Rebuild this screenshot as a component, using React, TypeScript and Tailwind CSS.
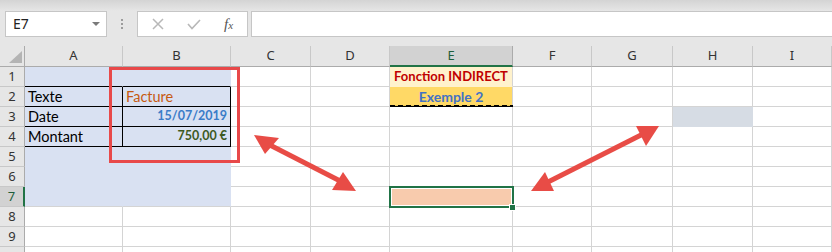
import React from 'react';

const letters = ['A', 'B', 'C', 'D', 'E', 'F', 'G', 'H', 'I'];
const rows = [1, 2, 3, 4, 5, 6, 7, 8, 9, 10];

function cellFont() {
  return "font-['Lato','Noto_Sans',sans-serif] text-[14.5px]";
}

function DataCell({ r, c }: { r: number; c: number }) {
  let bg = 'bg-white';
  let br = 'border-r-[#d4d4d4]';
  let bb = 'border-b-[#d4d4d4]';
  let content: React.ReactNode = null;
  let align = 'justify-start pl-[3px]';

  const shaded = (c === 0 || c === 1) && r >= 1 && r <= 7;
  if (shaded) {
    bg = 'bg-[#d9e1f2]';
    br = 'border-r-[#d9e1f2]';
    bb = r === 7 ? 'border-b-[#d4d4d4]' : 'border-b-[#d9e1f2]';
  }
  if ((c === 0 || c === 1) && r === 1) {
    bb = 'border-b-black';
  }
  if ((c === 0 || c === 1) && r >= 2 && r <= 4) {
    br = 'border-r-black';
    bb = 'border-b-black';
  }
  if (c === 0 && r === 2) content = <span className="text-black">Texte</span>;
  if (c === 0 && r === 3) content = <span className="text-black">Date</span>;
  if (c === 0 && r === 4) content = <span className="text-black">Montant</span>;
  if (c === 1 && r === 2) content = <span className="text-[#c65911]">Facture</span>;
  if (c === 1 && r === 3) {
    content = <span className="font-bold text-[12.5px] text-[#3a7cc8]">15/07/2019</span>;
    align = 'justify-end pr-[3px]';
  }
  if (c === 1 && r === 4) {
    content = <span className="font-bold text-[12.5px] text-[#3d5a1e]">750,00 €</span>;
    align = 'justify-end pr-[3px]';
  }
  if (c === 4 && r === 1) {
    bg = 'bg-[#fff2cc]';
    bb = 'border-b-[#fff2cc]';
    content = <span className="font-bold text-[13px] text-[#c00000]">Fonction INDIRECT</span>;
    align = 'justify-center';
  }
  if (c === 4 && r === 2) {
    bg = 'bg-[#ffd966]';
    content = <span className="font-bold text-[14px] text-[#4472c4]">Exemple 2</span>;
    align = 'justify-center';
  }
  if (c === 7 && r === 3) {
    bg = 'bg-[#d6dce4]';
    br = 'border-r-[#d6dce4]';
    bb = 'border-b-[#d6dce4]';
  }
  if (c === 4 && r === 7) {
    bg = 'bg-[#f8cbad]';
  }

  return (
    <div
      className={`h-[20px] border-r border-b ${br} ${bb} ${bg} flex items-center ${align} overflow-visible whitespace-nowrap ${cellFont()}`}
    >
      {content}
    </div>
  );
}

export default function App() {
  return (
    <div className="relative w-[832px] h-[252px] overflow-hidden bg-white">
      {/* Toolbar */}
      <div className="h-[46px] flex items-start pt-[11px] pl-[5px] bg-[linear-gradient(#d4d4d4,#e6e6e6_11px)]">
        <div className="w-[102px] h-[26px] bg-white border border-[#c6c6c6] flex items-center justify-between pl-[7px] pr-[5px]">
          <span className="font-['Noto_Sans','Open_Sans',sans-serif] text-[14px] text-[#222] leading-none">E7</span>
          <svg width="10" height="6" viewBox="0 0 10 6">
            <polygon points="1,1 9,1 5,5" fill="#7a7a7a" />
          </svg>
        </div>
        <div className="w-[30px] h-[26px] flex flex-col items-center justify-center gap-[2px]">
          <div className="w-[2px] h-[2px] bg-[#9c9c9c]" />
          <div className="w-[2px] h-[2px] bg-[#9c9c9c]" />
          <div className="w-[2px] h-[2px] bg-[#9c9c9c]" />
        </div>
        <div className="w-[111px] h-[26px] bg-white border border-[#c6c6c6] flex items-center">
          <div className="w-[38px] flex justify-center pl-[2px]">
            <svg width="12" height="12" viewBox="0 0 12 12">
              <path d="M1 1 L11 11 M11 1 L1 11" stroke="#b8b8b8" strokeWidth="1.5" fill="none" />
            </svg>
          </div>
          <div className="w-[36px] flex justify-center">
            <svg width="14" height="11" viewBox="0 0 14 11">
              <path d="M1 5 L5 9.5 L13 1" stroke="#b8b8b8" strokeWidth="1.6" fill="none" />
            </svg>
          </div>
          <div className="flex-1 flex justify-center pr-[2px]">
            <span className="font-['Liberation_Serif',serif] italic text-[15px] text-[#555] leading-none">
              f<span className="text-[11px]">x</span>
            </span>
          </div>
        </div>
        <div className="ml-[3px] flex-1 h-[26px] bg-white border border-[#c6c6c6] border-r-0" />
      </div>

      {/* Sheet grid */}
      <div className="grid grid-cols-[25px_98px_108px_80px_79px_123px_79px_81px_80px_79px]">
        {/* Header row */}
        <div className="h-[21px] bg-[#e6e6e6] border-b border-b-[#ababab] border-r border-r-[#ababab] flex items-end justify-end pr-[2px] pb-[3px]">
          <svg width="13" height="12" viewBox="0 0 13 12">
            <polygon points="0,12 13,0 13,12" fill="#b4b4b4" />
          </svg>
        </div>
        {letters.map((l, i) => (
          <div
            key={l}
            className={
              i === 4
                ? "h-[21px] bg-[#d2d2d2] border-b-2 border-b-[#217346] border-r border-r-[#ababab] flex items-center justify-center font-['Noto_Sans','Open_Sans',sans-serif] text-[13px] text-[#1e5e3a] pt-[1px]"
                : "h-[21px] bg-[#e6e6e6] border-b border-b-[#ababab] border-r border-r-[#c8c8c8] flex items-center justify-center font-['Noto_Sans','Open_Sans',sans-serif] text-[13px] text-[#333]"
            }
          >
            {l}
          </div>
        ))}

        {rows.map((r) => (
          <React.Fragment key={r}>
            <div
              className={
                r === 7
                  ? "h-[20px] bg-[#d2d2d2] border-b border-b-[#c8c8c8] border-r-2 border-r-[#217346] flex items-center justify-center font-['Noto_Sans','Open_Sans',sans-serif] text-[13px] text-[#1e5e3a]"
                  : "h-[20px] bg-[#e6e6e6] border-b border-b-[#c8c8c8] border-r border-r-[#ababab] flex items-center justify-center font-['Noto_Sans','Open_Sans',sans-serif] text-[13px] text-[#333]"
              }
            >
              {r}
            </div>
            {letters.map((l, c) => (
              <DataCell key={l} r={r} c={c} />
            ))}
          </React.Fragment>
        ))}
      </div>

      {/* Marching ants under E2 */}
      <div className="absolute left-[390px] top-[105px] w-[123px] h-[2px] flex flex-col">
        <div className="h-[1px] bg-[repeating-linear-gradient(90deg,#000_0_5px,#e8c85a_5px_8px)]" />
        <div className="h-[1px] bg-black" />
      </div>

      {/* Selection E7 */}
      <div className="absolute left-[389px] top-[186px] w-[125px] h-[22px] border-2 border-[#217346]">
        <div className="w-full h-full border border-white bg-[#f8cbad]" />
      </div>
      <div className="absolute left-[509px] top-[204px] w-[7px] h-[7px] bg-[#217346] border border-white" />

      {/* Red rectangle */}
      <div className="absolute left-[109px] top-[67px] w-[131px] h-[96px] border-[3px] border-[#e8494a]" />

      {/* Arrows */}
      <svg className="absolute left-0 top-0 pointer-events-none" width="832" height="252" viewBox="0 0 832 252">
        <g fill="#e84c46" stroke="none">
          <line x1="264" y1="142" x2="346" y2="184" stroke="#e84c46" strokeWidth="5" />
          <polygon points="254,135 279,138 265,154" />
          <polygon points="356,191 332,190 343,172" />
          <line x1="643" y1="134" x2="546" y2="183" stroke="#e84c46" strokeWidth="5" />
          <polygon points="659,126 636,126 646,146" />
          <polygon points="531,191 545,172 554,191" />
        </g>
      </svg>
    </div>
  );
}
